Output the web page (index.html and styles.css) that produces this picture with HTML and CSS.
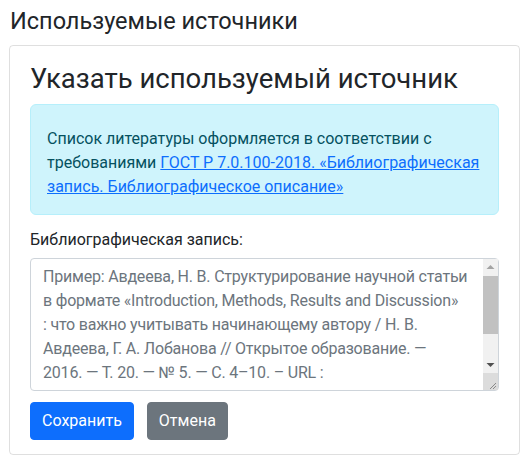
FILE: index.html
```html
<!DOCTYPE html>
<html lang="ru">
<head>
<meta charset="utf-8">
<title>Используемые источники</title>
<link rel="stylesheet" href="styles.css">
</head>
<body>
<div class="page">
  <h4 class="page-title">Используемые источники</h4>
  <div class="card">
    <h1 class="card-title">Указать используемый источник</h1>
    <div class="alert">
      Список литературы оформляется в соответствии с требованиями <a href="#" class="alert-link">ГОСТ Р 7.0.100-2018. «Библиографическая запись. Библиографическое описание»</a>
    </div>
    <label class="form-label" for="bib">Библиографическая запись:</label>
    <div class="field">
      <textarea id="bib" class="form-control" rows="5" placeholder="Пример: Авдеева, Н. В. Структурирование научной статьи&#10;в формате «Introduction, Methods, Results and Discussion»&#10;: что важно учитывать начинающему автору / Н. В.&#10;Авдеева, Г. А. Лобанова // Открытое образование. —&#10;2016. — Т. 20. — № 5. — С. 4–10. – URL :&#10;https://cyberleninka.ru/article/n/strukturirovanie-nauchnoy-stati (дата обращения: 01.09.2021)."></textarea>
      <div class="scrollbar" aria-hidden="true">
        <span class="sb-btn">
          <svg width="15" height="17" viewBox="0 0 15 17"><path d="M3.5 10 L7.5 6 L11.5 10 Z" fill="#a3a3a3"/></svg>
        </span>
        <span class="sb-track"><span class="sb-thumb"></span></span>
        <span class="sb-btn">
          <svg width="15" height="17" viewBox="0 0 15 17"><path d="M3.5 7 L7.5 11 L11.5 7 Z" fill="#505050"/></svg>
        </span>
        <span class="sb-corner">
          <svg width="15" height="17" viewBox="0 0 15 17"><path d="M13 10 L7 16 M13 13 L10 16" stroke="#8a8a8a" stroke-width="1" fill="none"/></svg>
        </span>
      </div>
    </div>
    <div class="actions">
      <button type="button" class="btn btn-primary">Сохранить</button>
      <button type="button" class="btn btn-secondary">Отмена</button>
    </div>
  </div>
</div>
</body>
</html>
```
FILE: styles.css
```css
html, body {
  margin: 0;
  padding: 0;
  background: #fff;
}
body {
  font-family: Roboto, "Noto Sans", sans-serif;
  font-size: 16px;
  line-height: 1.5;
  color: #212529;
}
.page {
  padding: 8px 9px 0 9px;
}
.page-title {
  margin: 0 0 10px 1px;
  font-size: 23.5px;
  font-weight: 400;
  line-height: 1.15;
}
.card {
  border: 1px solid rgba(0, 0, 0, 0.125);
  border-radius: 4px;
  padding: 16px 20px 14px 20px;
  width: 469px;
}
.card-title {
  margin: 0 0 9px 0;
  font-size: 27.5px;
  font-weight: 400;
  line-height: 1.2;
}
.alert {
  background: #cff4fc;
  border: 1px solid #b6effb;
  border-radius: 6px;
  color: #055160;
  padding: 22px 16px 15px 16px;
  margin-bottom: 13px;
}
.alert-link {
  color: #0d6efd;
  text-decoration: underline;
}
.form-label {
  display: block;
  margin-bottom: 6px;
}
.field {
  position: relative;
  margin: 0 0 11px 0;
}
.form-control {
  display: block;
  box-sizing: border-box;
  width: 100%;
  height: 133px;
  padding: 6px 12px 6px 12px;
  font-family: inherit;
  font-size: 16px;
  line-height: 1.5;
  letter-spacing: -0.2px;
  color: #212529;
  border: 1px solid #ced4da;
  border-radius: 4px;
  margin: 0;
  resize: none;
  overflow: hidden;
}
.form-control::placeholder {
  color: #6c757d;
  opacity: 1;
}
.scrollbar {
  position: absolute;
  top: 1px;
  right: 1px;
  bottom: 1px;
  width: 15px;
  display: flex;
  flex-direction: column;
  background: #f1f1f1;
}
.sb-btn {
  display: block;
  height: 17px;
  flex: none;
}
.sb-btn svg,
.sb-corner svg {
  display: block;
}
.sb-track {
  flex: 1;
  display: block;
}
.sb-thumb {
  display: block;
  height: 58px;
  background: #c1c1c1;
}
.sb-corner {
  display: block;
  height: 17px;
  flex: none;
  background: #dcdcdc;
}
.actions {
  display: flex;
  gap: 13px;
}
.btn {
  font-family: inherit;
  font-size: 16px;
  line-height: 24px;
  padding: 6px 11px;
  border-radius: 4px;
  border: 1px solid transparent;
  color: #fff;
}
.btn-primary {
  background: #0d6efd;
  border-color: #0d6efd;
}
.btn-secondary {
  background: #6c757d;
  border-color: #6c757d;
}
```
